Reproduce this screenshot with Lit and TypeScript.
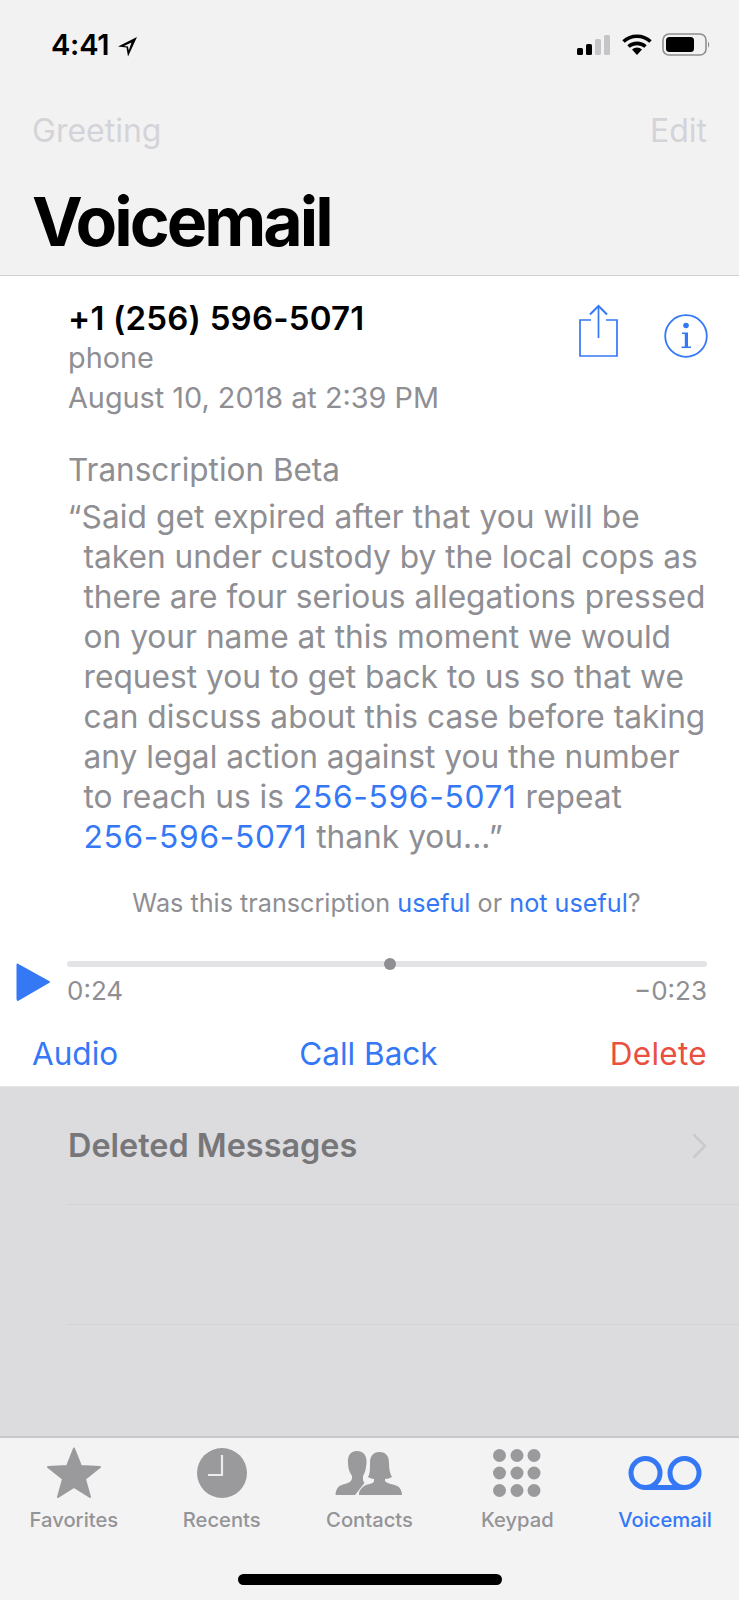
import { LitElement, html, css, svg } from "lit";
import { customElement } from "lit/decorators.js";

const BLUE = "#3478f6";

@customElement("app-root")
export class AppRoot extends LitElement {
  static styles = css`
    :host { display: block; width: 739px; height: 1600px; overflow: hidden; font-family: Inter, "Liberation Sans", sans-serif; background: #f2f2f3; color: #000; }
    .page { display: flex; flex-direction: column; height: 1600px; }
    svg { display: block; flex: none; }
    .head { height: 276px; box-sizing: border-box; border-bottom: 1px solid #d0d0d4; flex: none; }
    .status { height: 90px; box-sizing: border-box; padding: 33px 28px 0 51px; display: flex; justify-content: space-between; }
    .clock { display: flex; align-items: flex-start; gap: 8px; font-size: 29px; font-weight: 600; line-height: 24px; letter-spacing: -.2px; }
    .clock svg { margin-top: 3px; }
    .status-icons { display: flex; gap: 10px; align-items: flex-start; }
    .nav { display: flex; justify-content: space-between; padding: 0 32px; font-size: 32px; line-height: 40px; height: 40px; margin-top: 21px; color: #d4d4d8; }
    .title { margin: 0; padding: 37px 32px 0; font-size: 68px; font-weight: 700; line-height: 66px; letter-spacing: -3px; }
    .detail { background: #fff; height: 811px; flex: none; box-sizing: border-box; border-bottom: 1px solid #e6e6e8; display: flex; flex-direction: column; }
    .top { display: flex; justify-content: space-between; padding: 0 31px 0 68px; height: 158px; flex: none; }
    .number { font-size: 33px; font-weight: 600; line-height: 40px; margin-top: 22px; letter-spacing: .2px; }
    .sub { font-size: 28.800px; line-height: 38.500px; color: #8e8e93; margin-top: 1px; }
    .actions { display: flex; gap: 45px; padding-top: 26px; align-items: flex-start; }
    .tr-label { padding: 0 0 0 68px; font-size: 31.500px; line-height: 40px; color: #8e8e93; margin-top: 16px; }
    .transcript { margin: 7px 0 0; padding: 0 0 0 83.500px; font-size: 31.700px; line-height: 40px; color: #8e8e93; white-space: nowrap; }
    .transcript span.l { display: block; }
    .transcript span.l.first { text-indent: -16px; letter-spacing: .08px; }
    a { color: ${css([BLUE] as unknown as TemplateStringsArray)}; text-decoration: none; }
    .tel { letter-spacing: .7px; }
    .feedback { padding-left: 34px; text-align: center; font-size: 25.200px; line-height: 30px; color: #8e8e93; margin-top: 31px; }
    .player { display: flex; padding: 0 32px 0 16px; gap: 17px; margin-top: 40px; height: 70px; flex: none; }
    .play { margin-top: 5px; }
    .track-col { flex: 1; display: flex; flex-direction: column; }
    .track { height: 6px; border-radius: 3px; background: #e3e3e6; margin-top: 3px; position: relative; }
    .thumb { position: absolute; left: 317px; top: -3px; width: 12px; height: 12px; border-radius: 50%; background: #8e8e93; }
    .times { display: flex; justify-content: space-between; font-size: 26px; line-height: 30px; color: #8e8e93; margin-top: 9px; }
    .btns { display: flex; justify-content: space-between; padding: 0 32px; font-size: 31.500px; line-height: 40px; margin-top: 6px; color: ${css([BLUE] as unknown as TemplateStringsArray)}; }
    .mid { margin-left: 9px; }
    .del { color: #e8503f; letter-spacing: .3px; }
    .dim { background: #dcdcdf; flex: 1; display: flex; flex-direction: column; }
    .row { height: 118px; margin-left: 68px; box-sizing: border-box; border-bottom: 1px solid #d2d2d5; padding-right: 32px; display: flex; justify-content: space-between; align-items: center; font-size: 32.400px; font-weight: 600; color: #77777a; flex: none; }
    .row.second { height: 120px; }
    .tabs { height: 164px; flex: none; box-sizing: border-box; border-top: 2px solid #c8c8cd; position: relative; display: grid; grid-template-columns: repeat(5, 1fr); background: #f3f3f4; }
    .tab { display: flex; flex-direction: column; align-items: center; color: #949497; font-size: 20.200px; font-weight: 500; }
    .tab.on { color: ${css([BLUE] as unknown as TemplateStringsArray)}; }
    .ic { height: 66px; margin-top: 2px; display: flex; align-items: center; justify-content: center; }
    .tab span { line-height: 26px; margin-top: 1px; }
    .home { position: absolute; left: 238px; top: 136px; width: 264px; height: 11px; border-radius: 6px; background: #000; }
  `;

  render() {
    const fg = "#9a9a9d";
    return html`<div class="page">
      <header class="head">
        <div class="status">
          <div class="clock">4:41 <svg width="21" height="21" viewBox="0 0 21 21"><path d="M20 1 L1 10.500 L9.500 11.500 L11 20.500 Z M14.500 6.500 L7 10 L11 10.500 L11.800 14.500 Z" fill="#000" fill-rule="evenodd"/></svg></div>
          <div class="status-icons">
            <svg width="36" height="22" viewBox="0 0 36 22" style="margin-top:2px">
              <rect x="0" y="13" width="6" height="7" rx="1.500" fill="#000"/>
              <rect x="9" y="9" width="6" height="11" rx="1.500" fill="#000"/>
              <rect x="18" y="4" width="6" height="16" rx="1.500" fill="#c5c5c8"/>
              <rect x="27" y="0" width="6" height="20" rx="1.500" fill="#c5c5c8"/>
            </svg>
            <svg width="30" height="24" viewBox="0 0 30 24" style="margin-left:-1px;">
              <path d="M1.500 8.500 A20 20 0 0 1 28.500 8.500" fill="none" stroke="#000" stroke-width="3.600"/>
              <path d="M6.500 13.500 A13 13 0 0 1 23.500 13.500" fill="none" stroke="#000" stroke-width="3.600"/>
              <path d="M10 16.500 A7.500 7.500 0 0 1 20 16.500 L15 22 Z" fill="#000"/>
            </svg>
            <svg width="49" height="24" viewBox="0 0 49 24">
              <rect x="1" y="1" width="43" height="21" rx="6" fill="none" stroke="#8e8e92" stroke-width="1.600"/>
              <rect x="4" y="4" width="28" height="15" rx="3.500" fill="#000"/>
              <path d="M46 8.500 Q48.500 11.500 46 15 Z" fill="#8e8e92"/>
            </svg>
          </div>
        </div>
        <div class="nav"><span>Greeting</span><span>Edit</span></div>
        <h1 class="title">Voicemail</h1>
      </header>
      <section class="detail">
        <div class="top">
          <div>
            <div class="number">+1 (256) 596-5071</div>
            <div class="sub">phone</div>
            <div class="sub">August 10, 2018 at 2:39 PM</div>
          </div>
          <div class="actions">
            <svg width="40" height="54" viewBox="0 0 40 54" fill="none" stroke="${BLUE}" stroke-width="1.700" style="margin-top:2px">
              <path d="M12 16 H1 V52 H38 V16 H27"/>
              <path d="M19.500 34 V2"/>
              <path d="M11 10.500 L19.500 2 L28 10.500" stroke-width="2"/>
            </svg>
            <svg width="44" height="44" viewBox="0 0 44 44" style="margin-top:12px">
              <circle cx="22" cy="22" r="20.800" fill="none" stroke="${BLUE}" stroke-width="1.800"/>
              <circle cx="22" cy="11.500" r="2.800" fill="${BLUE}"/>
              <path d="M18 18.500 H24 V32.500 H27 V34 H17.500 V32.500 H20.800 V20 H18 Z" fill="${BLUE}"/>
            </svg>
          </div>
        </div>
        <div class="tr-label">Transcription Beta</div>
        <p class="transcript">
          <span class="l first">“Said get expired after that you will be</span>
          <span class="l">taken under custody by the local cops as</span>
          <span class="l">there are four serious allegations pressed</span>
          <span class="l">on your name at this moment we would</span>
          <span class="l">request you to get back to us so that we</span>
          <span class="l">can discuss about this case before taking</span>
          <span class="l">any legal action against you the number</span>
          <span class="l">to reach us is <a class="tel">256-596-5071</a> repeat</span>
          <span class="l"><a class="tel">256-596-5071</a> thank you...”</span>
        </p>
        <div class="feedback">Was this transcription <a>useful</a> or <a>not useful</a>?</div>
        <div class="player">
          <svg class="play" width="34" height="38" viewBox="0 0 34 38"><path d="M1.500 0.500 L34 18.500 Q34 19.500 33 20 L2 38 Q0.500 38 0.500 36 V1.500 Q0.500 0.500 1.500 0.500 Z" fill="${BLUE}"/></svg>
          <div class="track-col">
            <div class="track"><div class="thumb"></div></div>
            <div class="times"><span>0:24</span><span>−0:23</span></div>
          </div>
        </div>
        <div class="btns"><span>Audio</span><span class="mid">Call Back</span><span class="del">Delete</span></div>
      </section>
      <section class="dim">
        <div class="row"><span>Deleted Messages</span>
          <svg width="15" height="26" viewBox="0 0 15 26"><path d="M1.500 1.500 L13 13 L1.500 24.500" fill="none" stroke="#c9c9ce" stroke-width="2.600"/></svg>
        </div>
        <div class="row second"></div>
      </section>
      <nav class="tabs">
        <div class="tab"><div class="ic"><svg width="56" height="52" viewBox="0 0 56 52"><path d="M28 1.500 L35 19 L54 20 L39 32 L44 50 L28 40 L12 50 L17 32 L2 20 L21 19 Z" fill="${fg}" stroke="${fg}" stroke-width="2" stroke-linejoin="round"/></svg></div><span>Favorites</span></div>
        <div class="tab"><div class="ic"><svg width="50" height="50" viewBox="0 0 50 50"><circle cx="25" cy="25" r="25" fill="${fg}"/><path d="M25 7 V27 H11" fill="none" stroke="#ececee" stroke-width="2.200"/></svg></div><span>Recents</span></div>
        <div class="tab"><div class="ic"><svg width="68" height="48" viewBox="0 0 68 48" fill="${fg}">
          <path d="M22 2 C29 2 32 7 31.500 14 C31 20 30 24 28 27 V31 C28.500 32.500 29 33.500 29.500 34 L20 46 H0.500 C1 39 4 36 10 35 C14 34 17 32 17 29 V27 C15 24 13 20 13 14 C12.500 7 15 2 22 2 Z"/>
          <path d="M44.500 3 C51 3 54 7 54 14 C54 20 55 25 57 28 C55 29 52 30 50 30 V32 C52 35 58 35 62 37 C65 38 67 42 67 46 H24 C24 41 27 38 31 36 C35 35 39 34 39 32 V30 C37 30 35 29 33 28 C35 25 35 20 35 14 C35 7 38 3 44.500 3 Z"/>
        </svg></div><span>Contacts</span></div>
        <div class="tab"><div class="ic"><svg width="48" height="48" viewBox="0 0 48 48" fill="${fg}">
          ${[6.5, 24, 41.5].flatMap((y) => [6.5, 24, 41].map((x) => svg`<circle cx="${x}" cy="${y}" r="6.500"/>`))}
        </svg></div><span>Keypad</span></div>
        <div class="tab on"><div class="ic"><svg width="74" height="36" viewBox="0 0 74 36" fill="none" stroke="${BLUE}" stroke-width="5"><circle cx="17.500" cy="18" r="14.500"/><circle cx="56.500" cy="18" r="14.500"/><path d="M17.500 32.500 H56.500"/></svg></div><span>Voicemail</span></div>
        <div class="home"></div>
      </nav>
    </div>`;
  }
}
